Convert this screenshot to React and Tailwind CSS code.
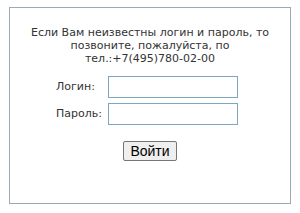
export default function App() {
  return (
    <div className="w-[300px] h-[213px] bg-white pt-[7px] pl-[9px]">
      <div className="w-[282px] h-[197px] border border-[#9aabb5] flex flex-col items-center">
        <p className="mt-[18px] text-center text-[11px] leading-[13px] text-[#333] font-['DejaVu_Sans',sans-serif] w-[250px]">
          Если Вам неизвестны логин и пароль, то позвоните, пожалуйста, по тел.:+7(495)780-02-00
        </p>
        <div className="mt-[11px] ml-[-6px] grid grid-cols-[auto_auto] gap-x-[6px] gap-y-[5px] items-center text-[11px] text-[#333] font-['DejaVu_Sans',sans-serif]">
          <span>Логин:</span>
          <input className="w-[130px] h-[22px] border border-[#7fa6c0] bg-white outline-none" />
          <span>Пароль:</span>
          <input type="password" className="w-[130px] h-[22px] border border-[#7fa6c0] bg-white outline-none" />
        </div>
        <button className="mt-[16px] h-[20px] px-[6px] border border-[#767676] rounded-[2px] bg-[#efefef] text-[14px] leading-[16px] text-black font-['Liberation_Sans',Arial,sans-serif]">
          Войти
        </button>
      </div>
    </div>
  );
}
